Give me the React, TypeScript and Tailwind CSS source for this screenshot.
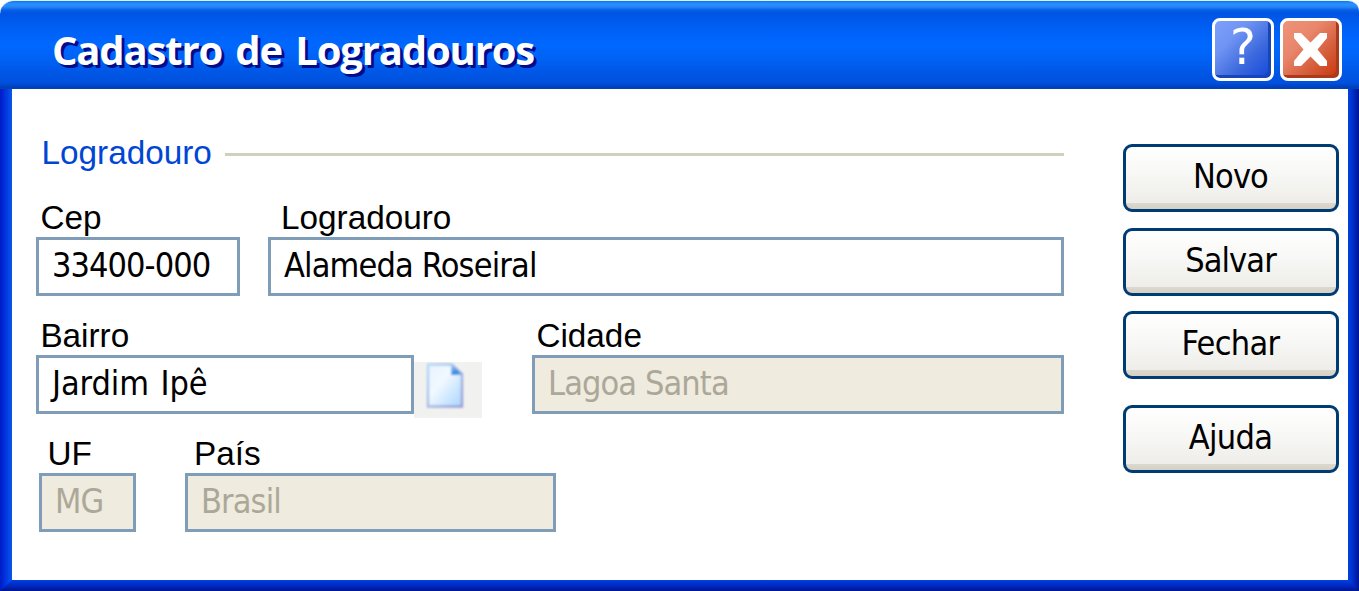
import type { ReactNode } from "react";

const tahoma = "[font-family:'DejaVu_Sans_Condensed','DejaVu_Sans',sans-serif] [font-stretch:condensed]";
const arial = "[font-family:'Liberation_Sans',Arial,sans-serif]";

function Field(props: {
  label: string;
  value: string;
  width: string;
  spacing: string;
  labelPad?: string;
  disabled?: boolean;
}) {
  return (
    <div className={`shrink-0 ${props.width}`}>
      <div className={`h-[38px] whitespace-nowrap text-[33.3px] leading-[38px] text-black ${arial} ${props.labelPad ?? "pl-[4.4px]"}`}>
        {props.label}
      </div>
      <div
        className={`h-[59px] whitespace-nowrap border-[3px] border-[#7f9db9] pl-[13px] text-[34px] leading-[50px] ${tahoma} ${props.spacing} ${
          props.disabled ? "bg-[#efebde] text-[#aca899]" : "bg-white text-black"
        }`}
      >
        {props.value}
      </div>
    </div>
  );
}

function Button({ children, className = "" }: { children: ReactNode; className?: string }) {
  return (
    <button
      className={`block h-[68px] w-[216px] rounded-[9px] border-[3px] border-[#003c74] bg-[linear-gradient(180deg,#ffffff_0%,#f7f7f5_45%,#eeede9_90%,#dcd8ce_91%,#d6d0c5_100%)] pb-[5px] pr-px text-center text-[34px] leading-[56px] text-black ${tahoma} ${className}`}
    >
      {children}
    </button>
  );
}

function PageIcon() {
  return (
    <svg width="68" height="56" viewBox="0 0 68 56">
      <defs>
        <linearGradient id="sheet" x1="0" y1="0" x2="1" y2="1">
          <stop offset="0" stopColor="#e4f2ff" />
          <stop offset=".4" stopColor="#f2f9ff" />
          <stop offset="1" stopColor="#a9d5ff" />
        </linearGradient>
        <linearGradient id="edge" x1="0" y1="0" x2="1" y2="1">
          <stop offset="0" stopColor="#b8d8f5" />
          <stop offset="1" stopColor="#989bd6" />
        </linearGradient>
        <linearGradient id="fold" x1="0" y1="0" x2="1" y2="1">
          <stop offset="0" stopColor="#add9ff" />
          <stop offset=".6" stopColor="#3287dc" />
          <stop offset="1" stopColor="#78b6ef" />
        </linearGradient>
        <filter id="soft"><feGaussianBlur stdDeviation=".9" /></filter>
      </defs>
      <g filter="url(#soft)">
        <path d="M14 2.5H38L48 12V44.5H14Z" fill="url(#sheet)" stroke="url(#edge)" strokeWidth="2.4" />
        <path d="M37 2L48.5 13H37Z" fill="url(#fold)" />
      </g>
    </svg>
  );
}

export default function App() {
  return (
    <div className="flex h-[591px] w-[1359px] flex-col overflow-hidden bg-white">
      <header className="flex h-[89px] shrink-0 items-start justify-between rounded-tl-[14px] rounded-tr-[11px] border-t border-[#d5f3ff] bg-[linear-gradient(180deg,#1674e8_0px,#2b90ff_3px,#2486fa_6px,#0860e4_9px,#0054e3_12px,#0060f5_28px,#0068ff_44px,#0062f4_58px,#0056e5_72px,#0050dd_82px,#0040bd_86px,#0043ae_88px)] pl-[52px] pr-[17px]">
        <h1 className="mt-[22px] whitespace-nowrap text-[40px] font-bold leading-[54px] tracking-[-1.15px] text-white [font-family:'Open_Sans',sans-serif] [text-shadow:3px_3px_0_#000c8c] [word-spacing:4px]">
          Cadastro de Logradouros
        </h1>
        <div className="mt-[17px] flex gap-[6px]">
          <button
            aria-label="Ajuda"
            className="flex h-[63px] w-[62px] items-center justify-center rounded-[8px] border-[3px] border-white bg-[linear-gradient(135deg,#7da0fc_0%,#7094f3_30%,#3b68dd_65%,#1048dc_100%)] shadow-[inset_-3px_-3px_0_#1846b8]"
          >
            <span className="pb-[3px] text-[49px] leading-[56px] text-white [font-family:'DejaVu_Sans',sans-serif]">?</span>
          </button>
          <button
            aria-label="Fechar janela"
            className="flex h-[63px] w-[62px] items-center justify-center rounded-[8px] border-[3px] border-white bg-[linear-gradient(135deg,#ef9379_0%,#e8866b_35%,#d65f3d_65%,#c83409_100%)] shadow-[inset_-3px_-3px_0_#aa3a1c]"
          >
            <svg className="mb-px mr-px" width="33" height="33" viewBox="0 0 33 33">
              <path d="M0 0H7L16.5 9.5L26 0H33V5L23.5 16.5L33 28V33H26L16.5 23.5L7 33H0V28L9.5 16.5L0 5Z" fill="white" />
            </svg>
          </button>
        </div>
      </header>

      <div className="flex h-[491px] shrink-0">
        <div className="h-[491px] w-3 shrink-0 bg-[linear-gradient(90deg,#001bc7,#0034df_45%,#0858e7)]" />
        <main className="flex w-[1336px] shrink-0 items-start bg-white pl-6">
          <section className="w-[1028px] shrink-0 pt-[45px]">
            <div className="flex h-[38px] items-center pl-[5.5px]">
              <h2 className={`w-[183.5px] shrink-0 text-[33.3px] leading-[38px] text-[#0046d5] ${arial}`}>Logradouro</h2>
              <div className="mt-[3px] h-[3px] flex-1 bg-[#d0d0bf]" />
            </div>
            <div className="mt-[27px] flex gap-7">
              <Field label="Cep" value="33400-000" width="w-[204px]" spacing="tracking-[-0.95px]" />
              <Field label="Logradouro" value="Alameda Roseiral" width="w-[796px]" spacing="tracking-[-0.85px]" labelPad="pl-[13px]" />
            </div>
            <div className="mt-[21px] flex h-[97px]">
              <Field label="Bairro" value="Jardim Ipê" width="w-[378px]" spacing="tracking-[-0.1px] [word-spacing:2px]" />
              <button aria-label="Novo bairro" className="mr-[50px] mt-[45px] h-[56px] w-[68px] shrink-0 bg-[#f1f2f0]">
                <PageIcon />
              </button>
              <Field label="Cidade" value="Lagoa Santa" width="w-[532px]" spacing="tracking-[-0.9px]" disabled />
            </div>
            <div className="mt-[21px] flex gap-[49px] pl-[3px]">
              <Field label="UF" value="MG" width="w-[97px]" spacing="tracking-[-0.9px]" labelPad="pl-[8.5px]" disabled />
              <Field label="País" value="Brasil" width="w-[371px]" spacing="tracking-[-0.9px]" labelPad="pl-[9px]" disabled />
            </div>
          </section>
          <nav className="ml-[59px] mt-[55px]">
            <Button className="tracking-[-0.9px]">Novo</Button>
            <Button className="mt-4 tracking-[-0.9px]">Salvar</Button>
            <Button className="mt-[15px] tracking-[-0.7px]">Fechar</Button>
            <Button className="mt-[26px] tracking-[-0.7px]">Ajuda</Button>
          </nav>
        </main>
        <div className="h-[491px] w-[11px] shrink-0 bg-[linear-gradient(90deg,#0043df,#002bc7_50%,#001590)]" />
      </div>
      <footer className="flex h-[11px] shrink-0 bg-[linear-gradient(180deg,#0040df,#0029c5_50%,#001590)]">
        <svg className="h-[11px] w-3" viewBox="0 0 12 11">
          <defs>
            <linearGradient id="leftEdge"><stop stopColor="#001bc7" /><stop offset=".45" stopColor="#0034df" /><stop offset="1" stopColor="#0858e7" /></linearGradient>
          </defs>
          <path d="M0 0H12L0 11Z" fill="url(#leftEdge)" />
        </svg>
        <div className="flex-1" />
        <svg className="h-[11px] w-[11px]" viewBox="0 0 11 11">
          <defs>
            <linearGradient id="rightEdge" gradientUnits="userSpaceOnUse" x1="0" y1="0" x2="11" y2="0"><stop stopColor="#0043df" /><stop offset=".5" stopColor="#002bc7" /><stop offset="1" stopColor="#001590" /></linearGradient>
          </defs>
          <path d="M0 0H11V11Z" fill="url(#rightEdge)" />
        </svg>
      </footer>
    </div>
  );
}
